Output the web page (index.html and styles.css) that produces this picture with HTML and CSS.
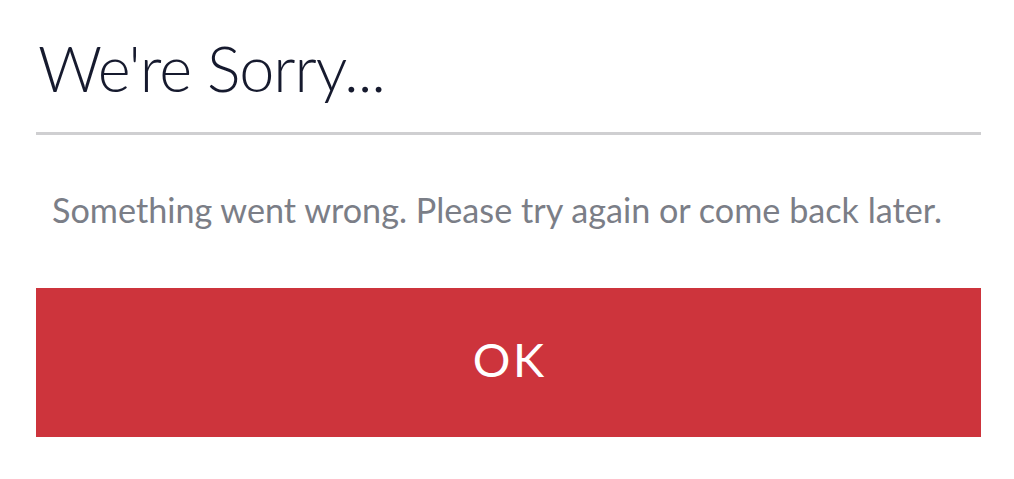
FILE: index.html
```html
<!DOCTYPE html>
<html>
<head>
<meta charset="utf-8">
<link rel="stylesheet" href="styles.css">
</head>
<body>
<div class="dialog">
  <h1 class="title">We're Sorry...</h1>
  <div class="divider"></div>
  <p class="message">Something went wrong. Please try again or come back later.</p>
  <button class="ok">OK</button>
</div>
</body>
</html>
```
FILE: styles.css
```css
html, body {
  margin: 0;
  padding: 0;
  background: #ffffff;
}
.dialog {
  width: 945px;
  margin-left: 36px;
  font-family: Lato, "Open Sans", sans-serif;
}
.title {
  margin: 0;
  padding: 28px 0 0 2px;
  font-size: 63px;
  font-weight: 300;
  line-height: 80px;
  letter-spacing: -1.1px;
  color: #161a2e;
}
.divider {
  margin-top: 24px;
  height: 3px;
  background: #cfcfd1;
}
.message {
  margin: 0;
  padding: 53px 0 0 16px;
  font-size: 34.2px;
  line-height: 44px;
  color: #7b7e87;
}
.ok {
  display: block;
  margin-top: 56px;
  width: 945px;
  height: 149px;
  border: 0;
  padding: 0 0 8px 0;
  background: #cd343c;
  color: #ffffff;
  font-family: Lato, "Open Sans", sans-serif;
  font-size: 47px;
  letter-spacing: 2.5px;
  text-indent: 2.5px;
}
```
